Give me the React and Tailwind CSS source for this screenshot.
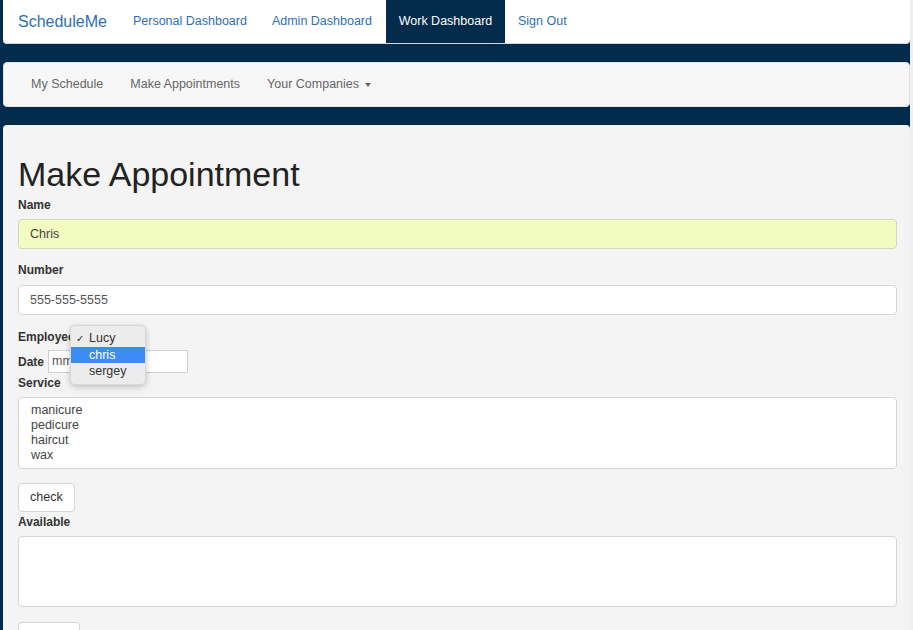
export default function App() {
  const font = { fontFamily: '"Liberation Sans", Arial, sans-serif' };
  return (
    <div className="h-[630px] overflow-hidden bg-[#032b4c] pl-[3px] border-r-[3px] border-[#efefef] flex flex-col" style={font}>
      {/* top navbar */}
      <nav className="shrink-0 h-[44px] bg-white rounded-b-[4px] border-b border-[#d8d8d8] flex items-stretch text-[12.5px]">
        <a className="pl-[15px] pr-[14px] flex items-center text-[16px] text-[#2f6fb3]">ScheduleMe</a>
        <a className="px-[12px] flex items-center text-[#2f6fb3]">Personal Dashboard</a>
        <a className="px-[13px] flex items-center text-[#2f6fb3]">Admin Dashboard</a>
        <a className="w-[119px] ml-[1px] flex items-center justify-center bg-[#032b4c] text-white font-medium">Work Dashboard</a>
        <a className="px-[13px] flex items-center text-[#2f6fb3]">Sign Out</a>
      </nav>

      {/* sub navbar */}
      <nav className="shrink-0 mt-[18px] h-[45px] bg-[#f7f7f7] border border-[#e2e2e2] rounded-[4px] flex items-center pl-[27px] gap-[27px] text-[12.5px] text-[#666]">
        <a>My Schedule</a>
        <a>Make Appointments</a>
        <a className="flex items-center gap-[6px]">
          Your Companies
          <span className="w-0 h-0 border-l-[3.5px] border-r-[3.5px] border-t-[4px] border-l-transparent border-r-transparent border-t-[#666]" />
        </a>
      </nav>

      {/* content */}
      <div className="shrink-0 mt-[18px] flex-1 bg-[#f4f4f4] rounded-t-[4px] pl-[15px] pr-[13px] pt-[31px] text-[12px] text-[#333]">
        <h1 className="text-[34px] leading-[36px] text-[#222]">Make Appointment</h1>

        <label className="block mt-[5px] mb-[5px] leading-[17px] font-bold">Name</label>
        <div className="h-[30px] rounded-[4px] border border-[#d6d6c0] bg-[#f2fcc0] flex items-center px-[11px] text-[12.5px] text-[#444]">Chris</div>

        <label className="block mt-[13px] mb-[6px] leading-[17px] font-bold">Number</label>
        <div className="h-[30px] rounded-[4px] border border-[#d6d6d6] bg-white flex items-center px-[11px] text-[12.5px] text-[#555]">555-555-5555</div>

        <div className="relative">
          <div className="mt-[14px] leading-[17px] font-bold">Employee</div>
          <div className="mt-[4px] h-[23px] flex items-center gap-[4px]">
            <span className="font-bold">Date</span>
            <div className="w-[140px] h-[23px] bg-white border border-[#d0d0d0] flex items-center px-[3px] text-[12.5px] text-[#555]">mm/dd/yyyy</div>
          </div>

          {/* open select menu */}
          <div className="absolute left-[52px] top-[-4px] w-[76px] py-[4px] bg-[#ececec] rounded-[5px] shadow-[0_2px_6px_rgba(0,0,0,0.22)] border border-[#d8d8d8] text-[12.5px] text-[#333]">
            <div className="h-[17px] flex items-center pl-[5px]">
              <span className="w-[13px] text-[10px]">✓</span>Lucy
            </div>
            <div className="h-[16px] flex items-center pl-[18px] bg-[#3b8cf4] text-white">chris</div>
            <div className="h-[17px] flex items-center pl-[18px]">sergey</div>
          </div>
        </div>

        <label className="block mt-[2px] mb-[5px] leading-[17px] font-bold">Service</label>
        <div className="h-[72px] rounded-[4px] border border-[#d6d6d6] bg-white px-[12px] pt-[5px] text-[12.5px] leading-[15px] text-[#444]">
          <div>manicure</div>
          <div>pedicure</div>
          <div>haircut</div>
          <div>wax</div>
        </div>

        <button className="mt-[14px] h-[29px] px-[11px] rounded-[4px] border border-[#d6d6d6] bg-white text-[12.5px] text-[#333]">check</button>

        <label className="block mt-[2px] mb-[5px] leading-[17px] font-bold">Available</label>
        <div className="h-[71px] rounded-[4px] border border-[#d6d6d6] bg-white" />

        <button className="mt-[15px] h-[29px] w-[62px] rounded-[4px] border border-[#d6d6d6] bg-white" />
      </div>
    </div>
  );
}
